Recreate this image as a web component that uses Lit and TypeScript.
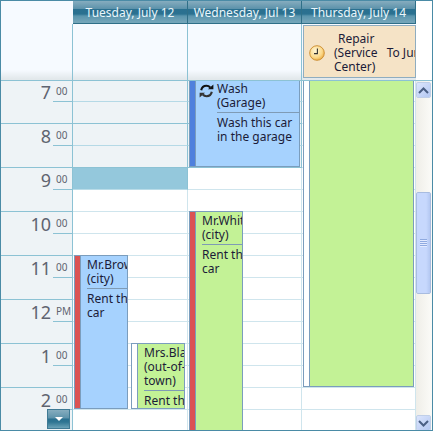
import { LitElement, html, css, svg } from "lit";
import { customElement } from "lit/decorators.js";

type Ev = {
  x: number; y: number; w: number; h: number;
  strip: string; bg: string;
  title: string[]; body: string[]; icon?: boolean;
};

const EVENTS: Ev[] = [
  { x: 188, y: -1, w: 111, h: 87, strip: "#4f80dd", bg: "#a6d2fe", title: ["Wash", "(Garage)"], body: ["Wash this car", "in the garage"], icon: true },
  { x: 73, y: 174, w: 54, h: 154, strip: "#db5353", bg: "#a6d2fe", title: ["Mr.Brown", "(city)"], body: ["Rent the", "car"] },
  { x: 130, y: 262, w: 54, h: 66, strip: "#ffffff", bg: "#c3f296", title: ["Mrs.Black", "(out-of-", "town)"], body: ["Rent the", "car"] },
  { x: 188, y: 130, w: 54, h: 240, strip: "#db5353", bg: "#c3f296", title: ["Mr.White", "(city)"], body: ["Rent the", "car"] },
  { x: 302, y: -2, w: 111, h: 308, strip: "#ffffff", bg: "#c3f296", title: [], body: [] },
];

const HOURS = [
  ["7", "00"], ["8", "00"], ["9", "00"], ["10", "00"],
  ["11", "00"], ["12", "PM"], ["1", "00"], ["2", "00"],
];

const recur = svg`<svg width="15" height="14" viewBox="0 0 15 14">
  <path d="M2.2 6.2C2.8 3.3 5 1.8 7.4 1.8c1.6 0 2.9.6 3.8 1.7" fill="none" stroke="#111" stroke-width="2.1"/>
  <path d="M9 5.2h5.4V.6z" fill="#111"/>
  <path d="M12.8 7.8c-.6 2.9-2.8 4.4-5.2 4.4-1.6 0-2.9-.6-3.8-1.7" fill="none" stroke="#333" stroke-width="2.1"/>
  <path d="M6 8.8H.6v4.6z" fill="#333"/>
</svg>`;

const clock = svg`<svg width="16" height="16" viewBox="0 0 16 16">
  <defs><radialGradient id="cg" cx=".4" cy=".35" r=".75">
    <stop offset="0" stop-color="#fff6d8"/><stop offset=".6" stop-color="#fbd98a"/><stop offset="1" stop-color="#e8a030"/>
  </radialGradient></defs>
  <circle cx="8" cy="8" r="7.3" fill="url(#cg)" stroke="#c98a2c" stroke-width=".9"/>
  <path d="M8.4 3.6V8.6H5" fill="none" stroke="#333" stroke-width="1.1"/>
</svg>`;

@customElement("app-root")
export class AppRoot extends LitElement {
  static styles = css`
    :host {
      display: block; width: 433px; height: 431px; box-sizing: border-box;
      border: 1px solid #4a8ba6; overflow: hidden; background: #fff;
      font-family: "Noto Sans", sans-serif; font-size: 12px; line-height: 14px; color: #1b1b38;
    }
    .row { display: grid; grid-template-columns: 72px 115px 114px 114px 16px; }
    .head { height: 23px; }
    .corner { background: #f6faff; }
    .dh {
      height: 23px; box-sizing: border-box; text-align: center; line-height: 23px; color: #eaf6fb;
      border-right: 1px solid #2f6f88; border-bottom: 1px solid #2f6f88;
      background: linear-gradient(#86adbf 0, #5e93ab 7.5px, #2a7090 8px, #2b7190 13px, #5a95ad 15px, #74a5b9 21px);
      white-space: nowrap; overflow: hidden;
    }
    .allday { height: 56px; border-bottom: 1px solid #8cc2d4; }
    .ad {
      background: linear-gradient(#f6faff 0, #f6faff 46px, #e2e8eb 55px);
      border-right: 1px solid #8cc2d4; position: relative;
    }
    .ad.last { border: 0; }
    .repair {
      margin: 1px 0 0 1px; height: 53px; box-sizing: border-box; padding-top: 2px;
      border: 1px solid #8fadc0; background: #f5e3c6;
      display: flex; align-items: center; overflow: hidden; white-space: nowrap;
    }
    .repair svg { margin-left: 5px; flex: none; }
    .repair-title { margin-left: 9px; flex: none; }
    .repair-title div:first-child { margin-left: 4px; }
    .repair-body { margin-left: 9px; }
    .main { display: flex; height: 350px; }
    .area {
      width: 415px; position: relative; overflow: hidden;
      display: grid; grid-template-columns: 72px 115px 114px 114px;
      align-content: start;
    }
    .time, .day { margin-top: -1px; }
    .hour {
      height: 44px; box-sizing: border-box; background: #eef3f6;
      border-right: 1px solid #8cc2d4; border-bottom: 1px solid #8cc2d4; color: #5f6470;
    }
    .hour-top {
      height: 22px; box-sizing: border-box; display: flex; padding-top: 2px;
      background: linear-gradient(#8cc2d4, #8cc2d4) right bottom / 19px 1px no-repeat;
    }
    .big { width: 50px; text-align: right; font-size: 18px; line-height: 20px; }
    .small { margin: 2px 0 0 5px; font-size: 10px; line-height: 14px; }
    .slot { height: 22px; box-sizing: border-box; border-right: 1px solid #cfe5ed; border-bottom: 1px solid #cfe5ed; }
    .slot.shade { background: #eef3f6; border-right-color: #8cc2d4; }
    .slot.shade.half { border-bottom-color: #b5d9e6; }
    .slot.shade.full { border-bottom-color: #8cc2d4; }
    .slot.sel { background: #94c8dc; border-right-color: #8cc2d4; border-bottom-color: #b9dce8; }
    .ev {
      position: absolute; box-sizing: border-box; border: 1px solid #7b9dbd;
      display: flex; overflow: hidden; white-space: nowrap;
    }
    .strip { width: 5px; flex: none; border-right: 1px solid #7b9dbd; }
    .gutter { width: 6px; flex: none; }
    .gutter.wide { width: 21px; padding: 3px 0 0 3px; box-sizing: border-box; }
    .gutter svg { display: block; }
    .content { flex: 1; min-width: 0; display: flex; flex-direction: column; }
    .ev-title { border-bottom: 1px solid #7f9bb5; padding: 2px 0; }
    .first .ev-title { padding-top: 1px; }
    .ev-body { padding-top: 3px; }
    .more {
      position: absolute; left: 46px; top: 328px; width: 23px; height: 20px; box-sizing: border-box;
      border: 1px solid #3f7a94;
      background: linear-gradient(#86adbf 0, #5e93ab 8px, #2a7090 9px, #2f7592 12px, #6ca3b8 18px);
      display: flex; align-items: center; justify-content: center;
    }
    .more i { border: 4px solid transparent; border-top: 4px solid #fff; border-bottom: 0; display: block; width: 0; height: 0; }
    .bar {
      width: 16px; box-sizing: border-box; padding-top: 1px; display: flex; flex-direction: column;
      background: linear-gradient(90deg, #efeee8, #fbfbf8);
    }
    .btn {
      width: 15px; height: 16px; box-sizing: border-box; border: 1px solid #eef2fb;
      background: linear-gradient(135deg, #dbe5fd, #b4c8f2); border-radius: 2px;
      outline: 1px solid #c0cfe8; outline-offset: -1px;
      display: flex; align-items: center; justify-content: center;
    }
    .btn svg { display: block; }
    .thumb {
      width: 15px; height: 102px; margin-top: 94px; box-sizing: border-box;
      border: 1px solid #eef2fb; outline: 1px solid #a8bce0; outline-offset: -1px; border-radius: 2px;
      background: linear-gradient(90deg, #c7d8fd, #c7d8fd 70%, #b4c8f2);
      display: flex; align-items: center; justify-content: center;
    }
    .grip { width: 7px; height: 8px; background: repeating-linear-gradient(#8faae0 0 1px, #e2eaff 1px 2px); }
    .btn.down { margin-top: auto; }
  `;

  private slots(kind: "tue" | "wed" | "thu") {
    const out = [];
    for (let i = 0; i < 16; i++) {
      let cls = "slot";
      if (kind !== "thu" && i < 4) cls += " shade " + (i % 2 ? "full" : "half");
      if (kind === "tue" && i === 4) cls += " sel";
      out.push(html`<div class=${cls}></div>`);
    }
    return out;
  }

  private lines(list: string[]) {
    return list.map((l) => html`<div>${l}</div>`);
  }

  render() {
    return html`
      <div class="row head">
        <div class="corner"></div>
        <div class="dh">Tuesday, July 12</div>
        <div class="dh">Wednesday, Jul 13</div>
        <div class="dh">Thursday, July 14</div>
      </div>
      <div class="row allday">
        <div class="ad"></div>
        <div class="ad"></div>
        <div class="ad"></div>
        <div class="ad last">
          <div class="repair">
            ${clock}
            <div class="repair-title"><div>Repair</div><div>(Service</div><div>Center)</div></div>
            <div class="repair-body">To Jungle</div>
          </div>
        </div>
      </div>
      <div class="main">
        <div class="area">
          <div class="time">
            ${HOURS.map(([h, m]) => html`<div class="hour"><div class="hour-top"><div class="big">${h}</div><div class="small">${m}</div></div></div>`)}
          </div>
          <div class="day">${this.slots("tue")}</div>
          <div class="day">${this.slots("wed")}</div>
          <div class="day">${this.slots("thu")}</div>
          ${EVENTS.map((e) => html`
            <div class="ev ${e.icon ? "first" : ""}" style="left:${e.x}px;top:${e.y}px;width:${e.w}px;height:${e.h}px;background:${e.bg}">
              <div class="strip" style="background:${e.strip}"></div>
              ${e.title.length ? html`
                <div class="gutter ${e.icon ? "wide" : ""}">${e.icon ? recur : ""}</div>
                <div class="content">
                  <div class="ev-title">${this.lines(e.title)}</div>
                  <div class="ev-body">${this.lines(e.body)}</div>
                </div>` : ""}
            </div>`)}
          <div class="more"><i></i></div>
        </div>
        <div class="bar">
          <div class="btn"><svg width="11" height="7" viewBox="0 0 11 7"><path d="M1 6l4.5-4.5L10 6" fill="none" stroke="#4a5f85" stroke-width="2"/></svg></div>
          <div class="thumb"><div class="grip"></div></div>
          <div class="btn down"><svg width="11" height="7" viewBox="0 0 11 7"><path d="M1 1l4.5 4.5L10 1" fill="none" stroke="#4a5f85" stroke-width="2"/></svg></div>
        </div>
      </div>
    `;
  }
}
